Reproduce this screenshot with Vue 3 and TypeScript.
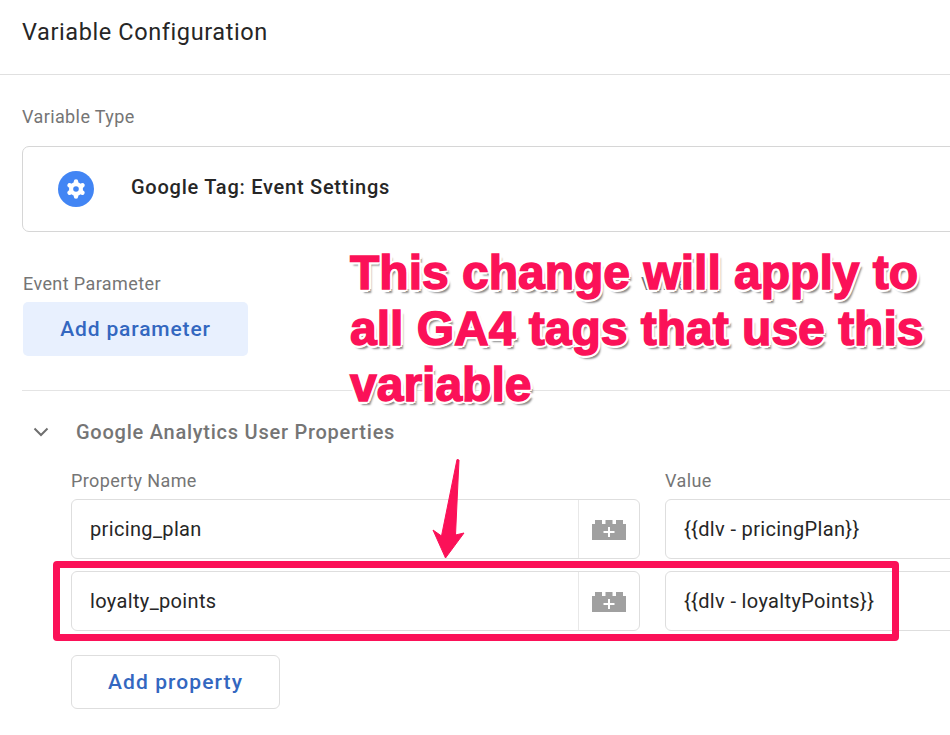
<script setup lang="ts">
const rows = [
  { name: 'pricing_plan', value: '{{dlv - pricingPlan}}' },
  { name: 'loyalty_points', value: '{{dlv - loyaltyPoints}}' },
]
const teeth = [0, 60, 120]
</script>

<template>
  <div class="page">
    <header class="head">Variable Configuration</header>

    <section class="type">
      <div class="label">Variable Type</div>
      <div class="type-card">
        <svg class="gear" width="38" height="38" viewBox="0 0 38 38">
          <circle cx="19" cy="19" r="18" fill="#4285f4" />
          <circle cx="19" cy="19" r="7" fill="#fff" />
          <line
            v-for="t in teeth"
            :key="t"
            x1="19"
            y1="11.500"
            x2="19"
            y2="26.500"
            stroke="#fff"
            stroke-width="4.400"
            stroke-linecap="round"
            :transform="`rotate(${t} 19 19)`"
          />
          <circle cx="19" cy="19" r="2.800" fill="#4285f4" />
        </svg>
        <span class="type-name">Google Tag: Event Settings</span>
      </div>
    </section>

    <section class="params">
      <div class="param-labels">
        <span class="label">Event Parameter</span>
        <span class="label">Value</span>
      </div>
      <button class="add-param">Add parameter</button>
    </section>

    <section class="props">
      <div class="props-head">
        <svg width="16" height="10" viewBox="0 0 16 10">
          <path d="M1.500 1.500L8 8l6.500-6.500" fill="none" stroke="#6f6f6f" stroke-width="2" />
        </svg>
        <span class="props-title">Google Analytics User Properties</span>
      </div>
      <div class="grid">
        <span class="label">Property Name</span>
        <span class="label">Value</span>
        <template v-for="row in rows" :key="row.name">
          <div class="field name-field">
            <span class="field-text">{{ row.name }}</span>
            <span class="picker">
              <svg width="34" height="20" viewBox="0 0 34 20">
                <path
                  fill="#a0a0a0"
                  fill-rule="evenodd"
                  d="M0 4h3V0h7v4h3.500V0h7v4h3.500V0h7v4h3v16H0zM16 7v4h-4.500v2H16v4h2v-4h4.500v-2H18V7z"
                />
              </svg>
            </span>
          </div>
          <div class="field value-field">
            <span class="field-text">{{ row.value }}</span>
          </div>
        </template>
      </div>
      <button class="add-prop">Add property</button>
    </section>

    <div class="note">This change will apply to all GA4 tags that use this variable</div>
    <div class="highlight"></div>
    <svg class="arrow" width="40" height="106" viewBox="0 0 40 106">
      <path
        fill="#fb1158"
        stroke="#fb1158"
        stroke-width="1"
        stroke-linejoin="round"
        d="M26 1.500L28 2 24.500 77 33 75 14.500 100 2 72 10.500 78z"
      />
    </svg>
  </div>
</template>

<style>
html,
body {
  margin: 0;
  background: #fff;
}
</style>

<style scoped>
.page {
  position: relative;
  width: 950px;
  height: 735px;
  overflow: hidden;
  font-family: Roboto, 'Liberation Sans', sans-serif;
  color: #262626;
  background: #fff;
}
.head {
  height: 56px;
  padding: 18px 0 0 22px;
  border-bottom: 1px solid #e0e0e0;
  font-size: 23.500px;
  line-height: 28px;
  letter-spacing: 0.6px;
}
.label {
  font-size: 18px;
  line-height: 20px;
  letter-spacing: 0.4px;
  color: #757575;
}
.type {
  padding: 32px 0 0 22px;
}
.type-card {
  display: flex;
  align-items: center;
  gap: 36px;
  height: 84px;
  margin-top: 19px;
  margin-right: -10px;
  padding-left: 34px;
  border: 1px solid #d6d6d6;
  border-radius: 7px;
}
.gear {
  flex: none;
}
.type-name {
  font-size: 20px;
  font-weight: 500;
  letter-spacing: 0.75px;
  margin-top: -4px;
}
.params {
  padding: 42px 0 0 23px;
}
.param-labels {
  display: flex;
  justify-content: flex-start;
  gap: 480px;
}
.add-param {
  display: block;
  width: 225px;
  height: 54px;
  margin-top: 8px;
  border: 0;
  border-radius: 5px;
  background: #e8f0fe;
  font-family: inherit;
  font-size: 21px;
  font-weight: 500;
  letter-spacing: 0.85px;
  color: #3367c0;
}
.props {
  margin: 34px 0 0 22px;
  border-top: 1px solid #e4e4e4;
}
.props-head {
  display: flex;
  align-items: center;
  gap: 27px;
  padding: 30px 0 0 11px;
  height: 22px;
}
.props-title {
  font-size: 20px;
  font-weight: 500;
  letter-spacing: 0.75px;
  color: #757575;
}
.grid {
  display: grid;
  grid-template-columns: 569px 400px;
  column-gap: 25px;
  row-gap: 12px;
  margin: 28px 0 0 49px;
}
.grid > .label {
  margin-bottom: -4px;
}
.field {
  display: flex;
  align-items: center;
  height: 60px;
  box-sizing: border-box;
  border: 1px solid #dedede;
  border-radius: 6px;
  font-size: 20px;
  letter-spacing: 0.35px;
}
.field-text {
  flex: 1;
  padding-left: 18px;
  white-space: nowrap;
}
.picker {
  display: flex;
  align-items: center;
  justify-content: center;
  width: 60px;
  height: 100%;
  border-left: 1px solid #e8e8e8;
}
.picker svg {
  margin-top: 2px;
}
.add-prop {
  display: block;
  width: 209px;
  height: 54px;
  margin: 24px 0 0 49px;
  background: #fff;
  border: 1px solid #dedede;
  border-radius: 6px;
  font-family: inherit;
  font-size: 21px;
  font-weight: 500;
  letter-spacing: 1.100px;
  color: #3367c0;
}
.note {
  position: absolute;
  left: 350px;
  top: 245px;
  width: 590px;
  font-family: 'Liberation Sans', Arial, sans-serif;
  font-size: 48px;
  line-height: 56px;
  font-weight: 700;
  color: #fb1158;
  -webkit-text-stroke: 1.500px #fb1158;
  text-shadow:
    -3px 0 #fff,
    3px 0 #fff,
    0 -3px #fff,
    0 3px #fff,
    -2px -2px #fff,
    2px -2px #fff,
    -2px 2px #fff,
    2px 2px #fff,
    3px 4px 2px #888;
}
.highlight {
  position: absolute;
  left: 53px;
  top: 561px;
  width: 846px;
  height: 80px;
  box-sizing: border-box;
  border: 7px solid #fb1158;
  border-radius: 4px;
}
.arrow {
  position: absolute;
  left: 431px;
  top: 458px;
}
</style>
